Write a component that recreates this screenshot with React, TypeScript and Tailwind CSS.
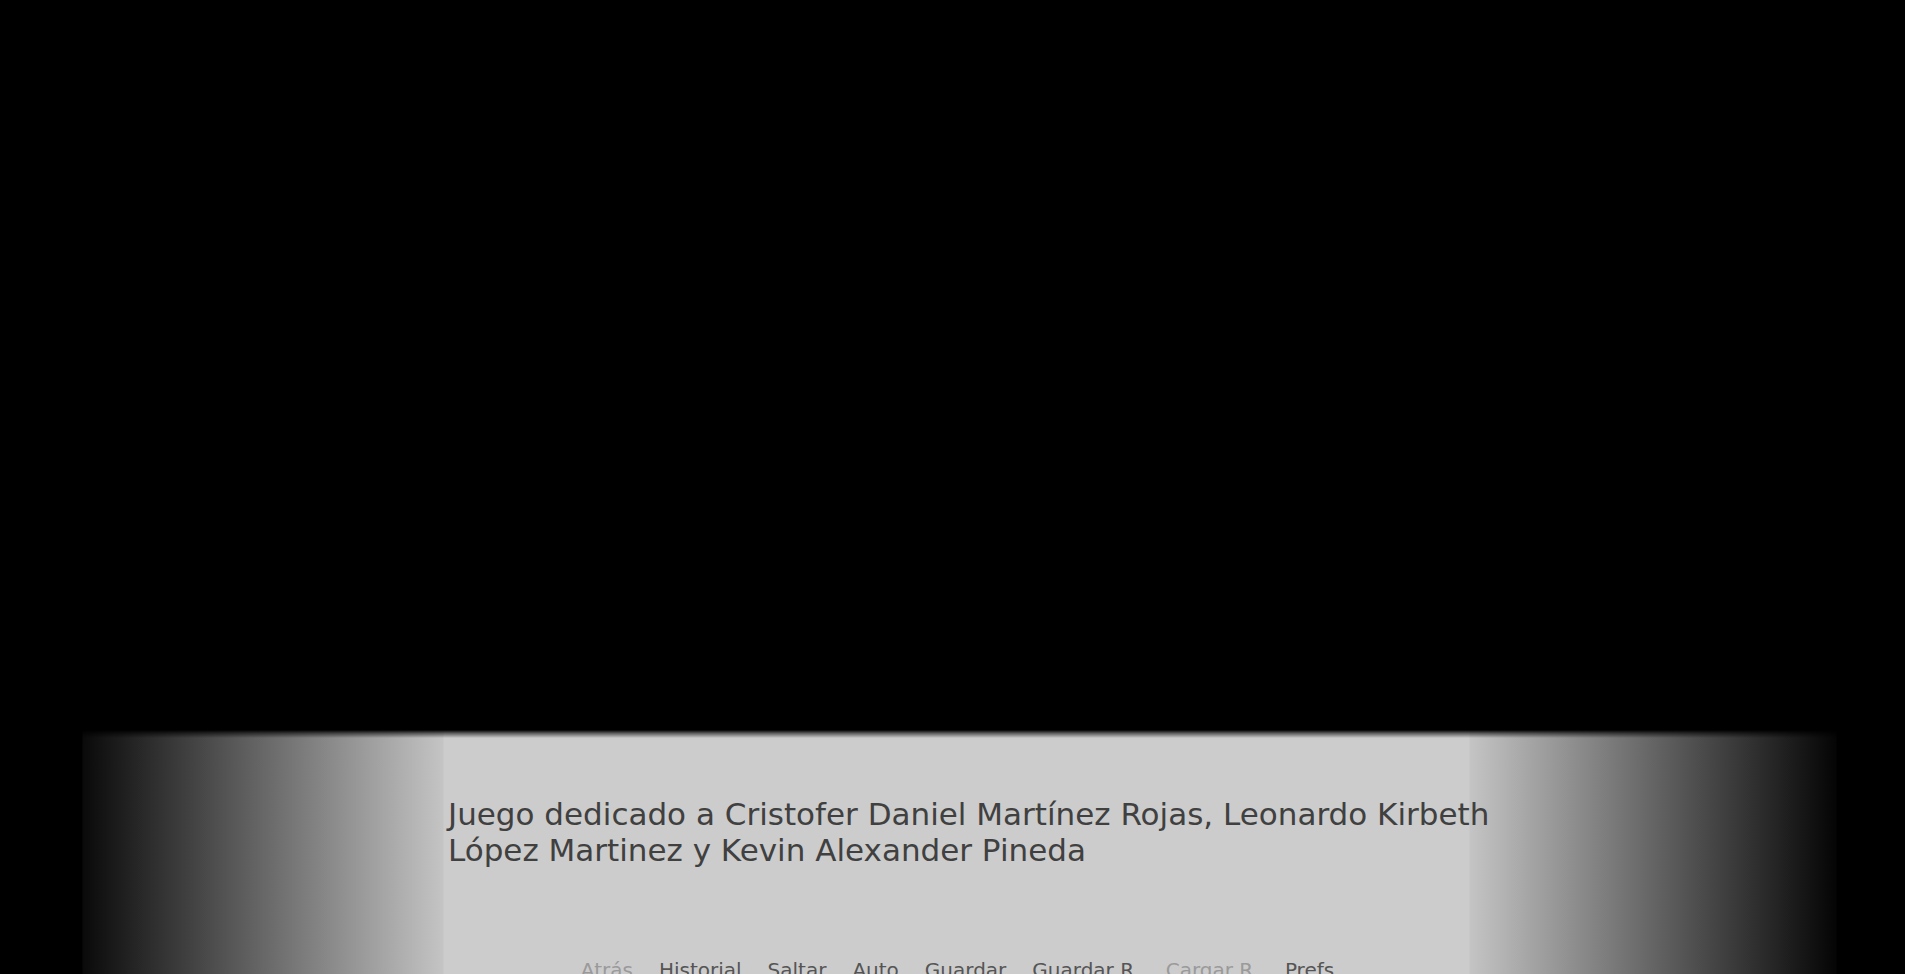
const quickMenu = [
  { label: 'Atrás', enabled: false },
  { label: 'Historial', enabled: true },
  { label: 'Saltar', enabled: true },
  { label: 'Auto', enabled: true },
  { label: 'Guardar', enabled: true },
  { label: 'Guardar R.', enabled: true },
  { label: 'Cargar R.', enabled: false },
  { label: 'Prefs', enabled: true },
];

export default function App() {
  return (
    <div className="h-[974px] w-full overflow-hidden bg-black flex flex-col font-['DejaVu_Sans',sans-serif]">
      {/* Scene area */}
      <div className="h-[730px] shrink-0 bg-black" />

      {/* Textbox */}
      <div className="flex-1 flex flex-col bg-[linear-gradient(to_right,#000_82px,#0a0a0a_83px,#c4c4c4_443px,#cccccc_444px,#cccccc_1469px,#c4c4c4_1470px,#050505_1836px,#000_1837px)]">
        <div className="h-[8px] bg-[linear-gradient(to_bottom,#000,rgba(0,0,0,0.55)_40%,rgba(0,0,0,0))]" />

        <div className="pl-[448px] pt-[58px]">
          <p className="w-[1080px] text-[31px] leading-[36px] text-[#404040]">
            Juego dedicado a Cristofer Daniel Martínez Rojas, Leonardo Kirbeth López Martinez y Kevin Alexander Pineda
          </p>
        </div>

        <div className="mt-[91px] flex justify-center gap-[26px] pl-[10px] text-[20px] leading-[23px]">
          {quickMenu.map((item) => (
            <span
              key={item.label}
              className={item.enabled ? 'text-[#555555]' : 'text-[#9a9a9a]'}
            >
              {item.label}
            </span>
          ))}
        </div>
      </div>
    </div>
  );
}
